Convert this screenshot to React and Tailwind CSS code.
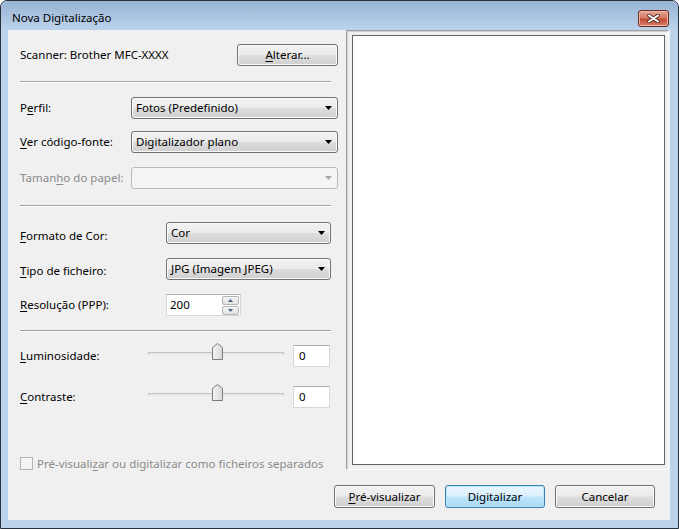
import React from 'react';

const face =
  'bg-[linear-gradient(#f2f2f2,#ebebeb_48%,#dddddd_52%,#cfcfcf)] border border-[#707070] rounded-[3px] shadow-[inset_0_0_0_1px_#fbfbfb]';

function Arrow({ disabled }) {
  return (
    <svg width="7" height="4" viewBox="0 0 7 4">
      <path d="M0 0h7L3.5 4z" fill={disabled ? '#a8a8a8' : '#000'} />
    </svg>
  );
}

function Sep({ className }) {
  return <div className={'w-[311px] border-t border-[#a0a0a0] border-b border-b-white ' + className} />;
}

function Combo({ value, className }) {
  return (
    <div className={face + ' h-[22px] flex items-center justify-between pl-[4px] pr-[5px] ' + className}>
      <span>{value}</span>
      <Arrow />
    </div>
  );
}

function Slider() {
  return (
    <div className="relative w-[136px] h-[22px]">
      <div className="absolute left-0 right-0 top-[7px] h-[3px] border border-[#c2c2c2] border-b-[#e9e9e9] bg-[#e7eaea]" />
      <svg className="absolute left-[64px] top-[-2px]" width="11" height="17" viewBox="0 0 11 17">
        <defs>
          <linearGradient id="tg" x1="0" x2="1">
            <stop offset="0" stopColor="#f4f4f4" />
            <stop offset="1" stopColor="#d9d9d9" />
          </linearGradient>
        </defs>
        <path d="M0.5 16.5V4.5L5.5 0.5L10.5 4.5V16.5Z" fill="url(#tg)" stroke="#7b7b7b" strokeLinejoin="round" />
      </svg>
    </div>
  );
}

function TextBox({ value, className }) {
  return (
    <div className={'h-[22px] bg-white border border-[#d5d9de] border-t-[#abadb3] flex items-center pl-[5px] ' + className}>
      {value}
    </div>
  );
}

function Spin() {
  return (
    <div className="h-[22px] w-[75px] bg-white border border-[#d5d9de] border-t-[#abadb3] flex items-center justify-between pl-[3px] pr-[1px]">
      <span>200</span>
      <div className="flex flex-col gap-[1px]">
        {[0, 1].map((i) => (
          <div
            key={i}
            className="w-[17px] h-[9px] rounded-[2px] border border-[#b5b5b5] bg-[linear-gradient(#f6f6f6,#e2e2e2)] flex items-center justify-center"
          >
            <svg width="5" height="3" viewBox="0 0 5 3">
              <path d={i === 0 ? 'M0 3h5L2.5 0z' : 'M0 0h5L2.5 3z'} fill="#4c607e" />
            </svg>
          </div>
        ))}
      </div>
    </div>
  );
}

export default function App() {
  return (
    <div className="w-[679px] h-[529px] font-['Noto_Sans',sans-serif] text-[11.5px] text-black leading-[16px]">
      <div className="w-full h-full border border-[#27313d] rounded-t-[7px] bg-[#bcd3ec] flex flex-col pl-[7px] pr-[8px] pb-[8px]">
        {/* title bar */}
        <div className="h-[29px] -ml-[7px] -mr-[8px] pl-[11px] pr-[9px] rounded-t-[6px] bg-[linear-gradient(#97b3d3,#bcd3ec)] flex items-start justify-between">
          <span className="pt-[9px]">Nova Digitalização</span>
          <div className="mt-[9px] w-[31px] h-[17px] rounded-[3px] border border-[#6d2a1f] bg-[linear-gradient(#e4a897,#d27a65_45%,#c24a33_55%,#d7826b)] flex items-center justify-center shadow-[inset_0_0_0_1px_#eeb8a8]">
            <svg width="13" height="9" viewBox="0 0 13 9">
              <path d="M2 1.5L11 7.5M11 1.5L2 7.5" stroke="#4a2a24" strokeWidth="3.6" strokeLinecap="round" />
              <path d="M2 1.5L11 7.5M11 1.5L2 7.5" stroke="#ffffff" strokeWidth="2" strokeLinecap="round" />
            </svg>
          </div>
        </div>

        {/* client */}
        <div className="flex-1 bg-[#f0f0f0] flex flex-col">
          <div className="flex">
            <div className="w-[338px] pl-[12px] flex flex-col">
              <div className="mt-[14px] w-[318px] h-[22px] flex items-center justify-between">
                <span>Scanner: Brother MFC-XXXX</span>
                <div className={face + ' w-[101px] h-[22px] flex items-center justify-center'}>
                  <span><u className="underline-offset-2">A</u>lterar...</span>
                </div>
              </div>
              <Sep className="mt-[15px]" />

              <div className="mt-[14px] flex items-center">
                <span className="w-[111px]">P<u className="underline-offset-2">e</u>rfil:</span>
                <Combo value="Fotos (Predefinido)" className="w-[207px]" />
              </div>
              <div className="mt-[12px] flex items-center">
                <span className="w-[111px]"><u className="underline-offset-2">V</u>er código-fonte:</span>
                <Combo value="Digitalizador plano" className="w-[207px]" />
              </div>
              <div className="mt-[14px] flex items-center">
                <span className="w-[111px] text-[#8a8a8a]">Taman<u className="underline-offset-2">h</u>o do papel:</span>
                <div className="w-[207px] h-[22px] rounded-[3px] border border-[#b8bcc0] bg-[#f4f4f4] flex items-center justify-end pr-[5px]">
                  <Arrow disabled />
                </div>
              </div>
              <Sep className="mt-[16px]" />

              <div className="mt-[15px] flex items-center">
                <span className="w-[146px] mt-[6px]"><u className="underline-offset-2">F</u>ormato de Cor:</span>
                <Combo value="Cor" className="w-[165px]" />
              </div>
              <div className="mt-[14px] flex items-center">
                <span className="w-[146px] mt-[3px]"><u className="underline-offset-2">T</u>ipo de ficheiro:</span>
                <Combo value="JPG (Imagem JPEG)" className="w-[165px]" />
              </div>
              <div className="mt-[14px] flex items-center">
                <span className="w-[146px]"><u className="underline-offset-2">R</u>esolução (PPP):</span>
                <Spin />
              </div>
              <Sep className="mt-[14px]" />

              <div className="mt-[13px] flex items-center">
                <span className="w-[128px]"><u className="underline-offset-2">L</u>uminosidade:</span>
                <Slider />
                <TextBox value="0" className="ml-[9px] w-[37px]" />
              </div>
              <div className="mt-[19px] flex items-center">
                <span className="w-[128px]"><u className="underline-offset-2">C</u>ontraste:</span>
                <Slider />
                <TextBox value="0" className="ml-[9px] w-[37px]" />
              </div>

              <div className="mt-[49px] h-[13px] flex items-center gap-[4px] text-[#8a8a8a]">
                <div className="w-[13px] h-[13px] border border-[#b4b4b4] bg-[#f4f4f4]" />
                <span>Pré-visuali<u className="underline-offset-2">z</u>ar ou digitalizar como ficheiros separados</span>
              </div>
            </div>

            {/* preview */}
            <div className="w-[323px] h-[440px] border border-[#a0a0a0] border-r-white border-b-white shadow-[inset_1px_1px_0_#d0d0d0] pt-[4px] pl-[5px] pr-[3px] pb-[4px] flex">
              <div className="flex-1 border border-[#646464] bg-white" />
            </div>
          </div>

          {/* buttons */}
          <div className="mt-[15px] flex justify-end gap-[10px] pr-[15px]">
            <div className={face + ' w-[101px] h-[23px] flex items-center justify-center'}>
              <span><u className="underline-offset-2">P</u>ré-visualizar</span>
            </div>
            <div className="w-[100px] h-[23px] rounded-[3px] border border-[#3c7fb1] bg-[linear-gradient(#eaf6fd,#d9f0fc_48%,#bee6fd_52%,#a7d9f5)] shadow-[inset_0_0_0_1px_#b9e6fb] flex items-center justify-center">
              Digitalizar
            </div>
            <div className={face + ' w-[100px] h-[23px] flex items-center justify-center'}>
              Cancelar
            </div>
          </div>
        </div>
      </div>
    </div>
  );
}
